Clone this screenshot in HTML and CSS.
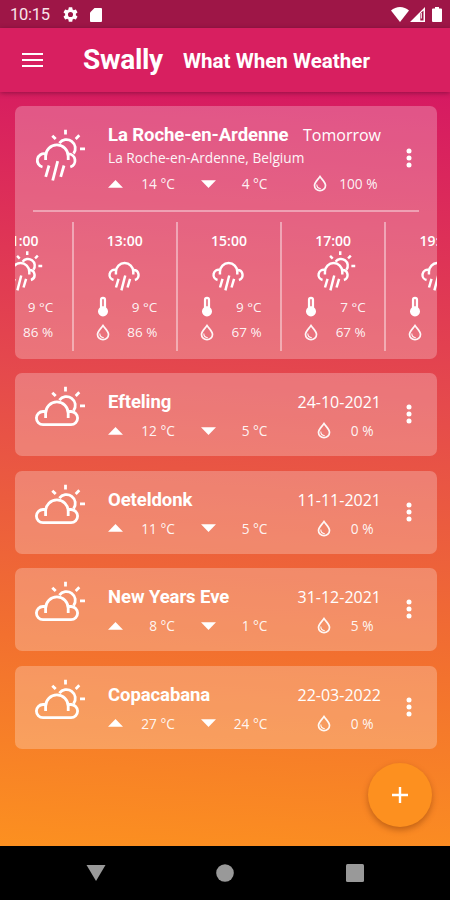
FILE: index.html
```
<!DOCTYPE html>
<html lang="en">
<head>
<meta charset="utf-8">
<title>Swally</title>
<link rel="stylesheet" href="styles.css">
</head>
<body>
<svg class="defs" aria-hidden="true">
  <defs>
    <g id="sun">
      <path d="M25.4 15.2A8.7 8.7 0 1 1 39.6 25.6"/>
      <path d="M31.5 1.7v4.8M46 20.9h5M18.3 7.7l3.4 3.4M45.3 7.3l-3.6 3.6"/>
    </g>
    <g id="raincloud">
      <path d="M11.6 32v-3.800a11.200 11.200 0 0 1 22.600 0V32"/>
      <path d="M11.500 25.900a6.700 6.700 0 0 0-3 13.100M34.300 25.900a6.700 6.700 0 0 1 2 13.100"/>
      <path d="M15 37.500l-3.300 11.300M23.700 33.200l-5 19.300M30 37.500l-3.300 11.300"/>
    </g>
    <g id="cloud">
      <path d="M11.600 33v-4.800a11.200 11.200 0 0 1 22.600 0V33"/>
      <path d="M11.500 26.500H9a6.600 6.600 0 0 0 0 13.200h28a6.600 6.600 0 0 0 0-13.200h-2.500"/>
    </g>
    <symbol id="drop" viewBox="0 0 14 17">
      <path d="M7 1.600C4.800 4.800 1.500 7.300 1.500 10.400a5.500 5.300 0 0 0 11 0C12.500 7.300 9.200 4.800 7 1.600z" fill="none" stroke="currentColor" stroke-width="1.700"/>
      <path d="M3.800 9.500c0 2.800 1.500 4 4 4.200" fill="none" stroke="currentColor" stroke-width="1.100"/>
    </symbol>
    <symbol id="thermo" viewBox="0 0 12 21">
      <path fill-rule="evenodd" d="M6 .7a3.100 3.100 0 0 0-3.100 3.100v7.700a5 5 0 1 0 6.200 0V3.800A3.100 3.100 0 0 0 6 .7zM5.200 3.800a.8.8 0 0 1 1.600 0v6.400H5.200z" fill="currentColor"/>
    </symbol>
    <symbol id="dots" viewBox="0 0 6 20">
      <g fill="currentColor"><circle cx="3" cy="3" r="2.500"/><circle cx="3" cy="10" r="2.500"/><circle cx="3" cy="17" r="2.500"/></g>
    </symbol>
    <symbol id="up" viewBox="0 0 15 8"><path d="M0 7.700L7.500 0 15 7.700z" fill="currentColor"/></symbol>
    <symbol id="down" viewBox="0 0 15 8"><path d="M0 .3h15L7.500 8z" fill="currentColor"/></symbol>
  </defs>
</svg>

<div class="phone">
  <div class="status">
    <span class="clock">10:15</span>
    <svg class="gear" viewBox="2 2 20 20"><path fill="currentColor" d="M19.140 12.940c.04-.3.06-.61.06-.94s-.02-.64-.07-.94l2.030-1.580a.49.49 0 0 0 .12-.61l-1.920-3.320a.49.49 0 0 0-.59-.22l-2.390.96a7 7 0 0 0-1.620-.94l-.36-2.540A.48.48 0 0 0 13.920 2.400h-3.840a.48.48 0 0 0-.47.41l-.36 2.540c-.59.24-1.130.57-1.620.94l-2.390-.96a.49.49 0 0 0-.59.22L2.740 8.870a.48.48 0 0 0 .12.61l2.030 1.580a6 6 0 0 0 0 1.880l-2.030 1.580a.49.49 0 0 0-.12.61l1.920 3.320c.12.22.37.29.59.22l2.390-.96c.5.38 1.030.7 1.620.94l.36 2.540c.05.24.24.41.47.41h3.840c.24 0 .44-.17.47-.41l.36-2.540a7 7 0 0 0 1.620-.94l2.390.96c.22.08.47 0 .59-.22l1.920-3.320a.48.48 0 0 0-.12-.61zM12 15.400a3.400 3.400 0 1 1 0-6.800 3.400 3.400 0 0 1 0 6.800z"/></svg>
    <svg class="sd" viewBox="0 0 12 14"><path fill="currentColor" d="M4.500 0H11a1 1 0 0 1 1 1v12a1 1 0 0 1-1 1H1a1 1 0 0 1-1-1V4.500z"/></svg>
    <svg class="wifi" viewBox="0 0 18 15"><path fill="currentColor" d="M9 15L0 3.600C5-1.100 13-1.100 18 3.600z"/></svg>
    <svg class="signal" viewBox="0 0 15 15"><path fill="currentColor" fill-rule="evenodd" d="M0 15L15 0v15zM10.300 6.500v7h3.200V3.500z"/><path d="M11.300 6v5.500" stroke="currentColor" stroke-width="1"/></svg>
    <svg class="battery" viewBox="0 0 10 15"><path fill="currentColor" d="M3 0h4v1.500h2a1 1 0 0 1 1 1V14a1 1 0 0 1-1 1H1a1 1 0 0 1-1-1V2.500a1 1 0 0 1 1-1h2z"/></svg>
  </div>

  <header class="appbar">
    <span class="burger"><i></i><i></i><i></i></span>
    <h1>Swally</h1>
    <h2>What When Weather</h2>
  </header>

  <main class="list">
    <section class="card featured">
      <div class="summary">
        <svg class="weather" viewBox="0 0 52 54"><use href="#sun"/><use href="#raincloud"/></svg>
        <div class="info">
          <div class="top"><h3>La Roche-en-Ardenne</h3><span class="date">Tomorrow</span></div>
          <div class="place">La Roche-en-Ardenne, Belgium</div>
          <div class="stats"><svg class="tri"><use href="#up"/></svg><span>14 °C</span><svg class="tri"><use href="#down"/></svg><span>4 °C</span><svg class="drop"><use href="#drop"/></svg><span>100 %</span></div>
        </div>
        <svg class="menu"><use href="#dots"/></svg>
      </div>
      <hr>
      <div class="hours">
        <div class="hour"><b>11:00</b><svg class="small" viewBox="0 0 52 54"><use href="#sun"/><use href="#raincloud"/></svg><p><span></span><span>9 °C</span></p><p><span></span><span>86 %</span></p></div>
        <div class="hour"><b>13:00</b><svg class="small" viewBox="0 0 52 54"><use href="#raincloud"/></svg><p><svg class="thermo"><use href="#thermo"/></svg><span>9 °C</span></p><p><svg class="drop"><use href="#drop"/></svg><span>86 %</span></p></div>
        <div class="hour"><b>15:00</b><svg class="small" viewBox="0 0 52 54"><use href="#raincloud"/></svg><p><svg class="thermo"><use href="#thermo"/></svg><span>9 °C</span></p><p><svg class="drop"><use href="#drop"/></svg><span>67 %</span></p></div>
        <div class="hour"><b>17:00</b><svg class="small" viewBox="0 0 52 54"><use href="#sun"/><use href="#raincloud"/></svg><p><svg class="thermo"><use href="#thermo"/></svg><span>7 °C</span></p><p><svg class="drop"><use href="#drop"/></svg><span>67 %</span></p></div>
        <div class="hour"><b>19:00</b><svg class="small" viewBox="0 0 52 54"><use href="#raincloud"/></svg><p><svg class="thermo"><use href="#thermo"/></svg></p><p><svg class="drop"><use href="#drop"/></svg></p></div>
      </div>
    </section>

    <section class="card">
      <div class="summary">
        <svg class="weather" viewBox="0 0 52 54"><use href="#sun"/><use href="#cloud"/></svg>
        <div class="info">
          <div class="top"><h3>Efteling</h3><span class="date">24-10-2021</span></div>
          <div class="stats"><svg class="tri"><use href="#up"/></svg><span>12 °C</span><svg class="tri"><use href="#down"/></svg><span>5 °C</span><svg class="drop"><use href="#drop"/></svg><span>0 %</span></div>
        </div>
        <svg class="menu"><use href="#dots"/></svg>
      </div>
    </section>
    <section class="card">
      <div class="summary">
        <svg class="weather" viewBox="0 0 52 54"><use href="#sun"/><use href="#cloud"/></svg>
        <div class="info">
          <div class="top"><h3>Oeteldonk</h3><span class="date">11-11-2021</span></div>
          <div class="stats"><svg class="tri"><use href="#up"/></svg><span>11 °C</span><svg class="tri"><use href="#down"/></svg><span>5 °C</span><svg class="drop"><use href="#drop"/></svg><span>0 %</span></div>
        </div>
        <svg class="menu"><use href="#dots"/></svg>
      </div>
    </section>
    <section class="card">
      <div class="summary">
        <svg class="weather" viewBox="0 0 52 54"><use href="#sun"/><use href="#cloud"/></svg>
        <div class="info">
          <div class="top"><h3>New Years Eve</h3><span class="date">31-12-2021</span></div>
          <div class="stats"><svg class="tri"><use href="#up"/></svg><span>8 °C</span><svg class="tri"><use href="#down"/></svg><span>1 °C</span><svg class="drop"><use href="#drop"/></svg><span>5 %</span></div>
        </div>
        <svg class="menu"><use href="#dots"/></svg>
      </div>
    </section>
    <section class="card">
      <div class="summary">
        <svg class="weather" viewBox="0 0 52 54"><use href="#sun"/><use href="#cloud"/></svg>
        <div class="info">
          <div class="top"><h3>Copacabana</h3><span class="date">22-03-2022</span></div>
          <div class="stats"><svg class="tri"><use href="#up"/></svg><span>27 °C</span><svg class="tri"><use href="#down"/></svg><span>24 °C</span><svg class="drop"><use href="#drop"/></svg><span>0 %</span></div>
        </div>
        <svg class="menu"><use href="#dots"/></svg>
      </div>
    </section>
    <div class="fab"><svg viewBox="0 0 16 16"><path d="M8 0v16M0 8h16" stroke="currentColor" stroke-width="2.400"/></svg></div>
  </main>

  <nav class="navbar">
    <svg viewBox="0 0 20 20"><path d="M.5 2h19L10 18z" fill="currentColor"/></svg>
    <svg viewBox="0 0 20 20"><circle cx="10" cy="10" r="8.800" fill="currentColor"/></svg>
    <svg viewBox="0 0 20 20"><rect x="1" y="1" width="18" height="18" rx="1.500" fill="currentColor"/></svg>
  </nav>
</div>
</body>
</html>
```
FILE: styles.css
```
* { box-sizing: border-box; }
body { margin: 0; color: #fff; font-family: "Open Sans", "Noto Sans", sans-serif; }
h1, h2, h3, p { margin: 0; }
svg { display: block; flex: none; }
.defs { position: absolute; width: 0; height: 0; }

.phone { width: 450px; height: 900px; display: flex; flex-direction: column; overflow: hidden; }

.status { height: 28px; flex: none; background: #9e1647; display: flex; align-items: center; padding: 1px 8px 0 10px; font-family: Roboto, sans-serif; }
.clock { width: 53px; font-size: 16.500px; letter-spacing: -0.25px; color: #f8e4ea; }
.gear { width: 15px; height: 15px; margin-right: 12px; }
.sd { width: 12px; height: 14px; }
.wifi { width: 18px; height: 15px; margin-left: auto; }
.signal { width: 15px; height: 15px; margin: 0 7px 0 1px; }
.battery { width: 10px; height: 15px; }

.appbar { height: 64px; flex: none; position: relative; z-index: 1; display: flex; align-items: center; padding: 0 22px; background: #d81f60; box-shadow: 0 1px 5px rgba(60, 0, 30, .45); font-family: Roboto, sans-serif; }
.burger { width: 21px; display: flex; flex-direction: column; gap: 3.500px; margin-right: 40px; }
.burger i { height: 2.500px; background: #fff; }
h1 { width: 100px; font-size: 28px; line-height: 34px; font-weight: 700; letter-spacing: -0.3px; }
h2 { font-size: 20.600px; font-weight: 700; white-space: nowrap; padding-top: 1px; }

.list { flex: 1; position: relative; min-height: 0; display: flex; flex-direction: column; gap: 14.400px; padding: 14px 13.500px 0 14.500px; background: linear-gradient(184deg, #d61962 0%, #e54a4c 40%, #f2702f 73%, #fc9020 100%); }
.card { height: 83px; flex: none; border-radius: 7px; overflow: hidden; background: rgba(255, 255, 255, .25); }
.featured { height: 253px; }
.summary { height: 83px; display: flex; align-items: flex-start; padding: 11.500px 0 0 19.500px; }
.featured .summary { height: 104px; padding-top: 22.500px; }
.weather { width: 52px; height: 54px; margin-top: .5px; }
.featured .weather { margin-top: -.5px; }
.weather, .small { fill: none; stroke: #fff; stroke-width: 2.800; }
.info { width: 273px; margin-left: 22px; padding-top: 4.500px; }
.featured .info { padding-top: 0; margin-top: -7px; }
.top { height: 26px; display: flex; align-items: center; justify-content: space-between; white-space: nowrap; }
h3 { font: 700 18.500px/26px Roboto, sans-serif; letter-spacing: -0.08px; }
.date { font-size: 16px; }
.place { font-size: 13.700px; line-height: 18px; margin-top: 1px; opacity: .94; white-space: nowrap; }
.stats { display: grid; grid-template-columns: 15px 52px 41px 51.500px 63px 43px; align-items: center; height: 20px; margin-top: 5.500px; font-size: 13.700px; color: rgba(255, 255, 255, .93); }
.featured .stats { grid-template-columns: 15px 52px 41px 51.500px 59px 51px; margin-top: 7px; }
.stats span { text-align: right; white-space: nowrap; }
.tri { width: 15px; height: 8px; justify-self: end; color: #fff; }
.drop { width: 14px; height: 17px; }
.stats .drop { justify-self: end; }
.menu { width: 6px; height: 20px; margin: 19.500px 0 0 24.500px; }
hr { width: 386px; height: 2px; border: 0; margin: 0 0 10px 18.500px; background: rgba(255, 255, 255, .4); }
.hours { display: flex; margin-left: -45px; width: 521px; height: 129px; }
.hour { width: 104.200px; flex: none; border-right: 2px solid rgba(255, 255, 255, .42); text-align: center; font-size: 13.500px; }
.hour b { display: block; height: 20px; margin-top: 9px; line-height: 20px; font-weight: 600; font-size: 14px; }
.small { width: 40px; height: 41.500px; margin: -1.500px 0 0 33.500px; stroke-width: 3.200; }
.hour p { display: flex; align-items: center; justify-content: space-between; height: 20px; margin: 5.500px 18.500px 0 22px; color: rgba(255, 255, 255, .93); }
.hour p + p { margin-top: 5.500px; }
.thermo { width: 12px; height: 21px; margin-left: 1px; color: #fff; }

.fab { position: absolute; right: 18px; bottom: 19px; width: 64px; height: 64px; border-radius: 50%; background: #fd901f; box-shadow: 0 3px 6px rgba(110, 40, 0, .4); display: flex; align-items: center; justify-content: center; }
.fab svg { width: 16px; height: 16px; }

.navbar { height: 54px; flex: none; display: flex; align-items: center; justify-content: space-between; padding: 0 85px 0 85.500px; background: #000; color: #999; }
.navbar svg { width: 20px; height: 20px; }
```
